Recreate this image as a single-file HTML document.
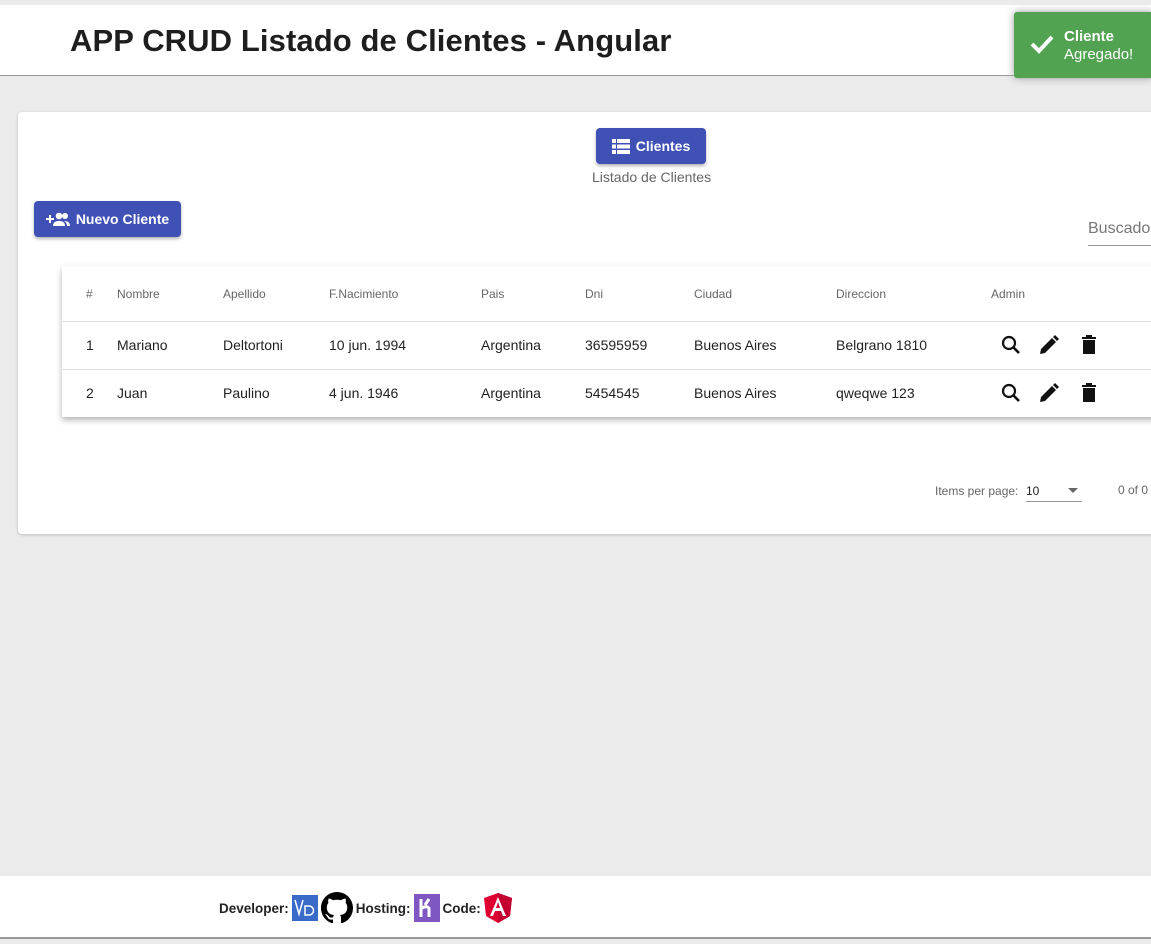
<!DOCTYPE html>
<html><head><meta charset="utf-8"><style>
*{box-sizing:border-box;margin:0;padding:0}
body{width:1151px;height:944px;background:#ebebeb;font-family:"Liberation Sans",sans-serif;position:relative;overflow:hidden;color:#222}
.hdr{position:absolute;left:0;top:5px;width:1151px;height:71px;background:#fff;border-bottom:1px solid #999}
.hdr h1{position:absolute;left:70px;top:18px;font-size:31px;font-weight:bold;letter-spacing:0.1px;color:#1e1e1e}
.toast{position:absolute;left:1014px;top:12px;width:140px;height:66px;background:#51a351;color:#fff;box-shadow:0 0 8px #999;border-radius:3px}
.toast .t{position:absolute;left:50px;top:16px;font-size:15px;line-height:18px}
.card{position:absolute;left:18px;top:112px;width:1140px;height:422px;background:#fff;border-radius:4px;box-shadow:0 1px 3px rgba(0,0,0,.2)}
.btn{position:absolute;background:#3f51b5;color:#fff;font-weight:bold;font-size:14px;border-radius:4px;box-shadow:0 2px 3px rgba(0,0,0,.3);display:flex;align-items:center;justify-content:center;gap:6px}
.sub{position:absolute;left:574px;top:57px;font-size:14px;color:#666}
.srch{position:absolute;left:1070px;top:108px;width:80px;font-size:16px;color:#777;border-bottom:1px solid #999;padding-bottom:7px}
.tbl{position:absolute;left:44px;top:154px;width:1100px;height:151px;background:#fff;box-shadow:0 3px 6px rgba(0,0,0,.3)}
.row{position:absolute;left:0;width:1100px;font-size:14px}
.row span{position:absolute}
.h span{font-size:12px;color:#666}
.line{position:absolute;left:0;width:1100px;height:1px;background:#e0e0e0}
.pg{position:absolute;font-size:12px;color:#666}
.ftr{position:absolute;left:0;top:876px;width:1151px;height:63px;background:#fff;border-bottom:2px solid #999}
.ftr .c{position:absolute;left:219px;top:16px;display:flex;align-items:center;gap:3px;font-weight:bold;font-size:13.5px}
</style></head><body>
<div class="hdr"><h1>APP CRUD Listado de Clientes - Angular</h1></div>
<div class="toast"><svg style="position:absolute;left:16px;top:22px" width="24" height="20" viewBox="0 0 24 20"><path d="M2 10l7 7L22 3" stroke="#fff" stroke-width="4" fill="none"/></svg><div class="t"><b>Cliente</b><br>Agregado!</div></div>
<div class="card">
 <div class="btn" style="left:578px;top:16px;width:110px;height:36px"><svg width="18" height="15" viewBox="0 0 18 15"><g fill="#fff"><rect x="0" y="0" width="4" height="4"/><rect x="5" y="0" width="13" height="4"/><rect x="0" y="5.5" width="4" height="4"/><rect x="5" y="5.5" width="13" height="4"/><rect x="0" y="11" width="4" height="4"/><rect x="5" y="11" width="13" height="4"/></g></svg>Clientes</div>
 <div class="sub">Listado de Clientes</div>
 <div class="btn" style="left:16px;top:89px;width:147px;height:36px"><svg width="24" height="14" viewBox="0 0 24 14"><g fill="#fff"><path d="M0 6h3V3h2v3h3v2H5v3H3V8H0z"/><circle cx="13" cy="4" r="3.3"/><circle cx="19" cy="4" r="3"/><path d="M7 14c0-4 3-5 6-5s6 1 6 5z"/><path d="M18 9c3 0 6 1 6 5h-3c0-2-1-4-3-5z"/></g></svg>Nuevo Cliente</div>
 <div class="srch">Buscador</div>
 <div class="tbl">
  <div class="row h" style="top:21px"><span style="left:24px">#</span><span style="left:55px">Nombre</span><span style="left:161px">Apellido</span><span style="left:267px">F.Nacimiento</span><span style="left:419px">Pais</span><span style="left:523px">Dni</span><span style="left:632px">Ciudad</span><span style="left:774px">Direccion</span><span style="left:929px">Admin</span></div>
  <div class="line" style="top:55px"></div>
  <div class="row" style="top:71px"><span style="left:24px">1</span><span style="left:55px">Mariano</span><span style="left:161px">Deltortoni</span><span style="left:267px">10 jun. 1994</span><span style="left:419px">Argentina</span><span style="left:523px">36595959</span><span style="left:632px">Buenos Aires</span><span style="left:774px">Belgrano 1810</span></div>
  <div class="line" style="top:103px"></div>
  <div class="row" style="top:119px"><span style="left:24px">2</span><span style="left:55px">Juan</span><span style="left:161px">Paulino</span><span style="left:267px">4 jun. 1946</span><span style="left:419px">Argentina</span><span style="left:523px">5454545</span><span style="left:632px">Buenos Aires</span><span style="left:774px">qweqwe 123</span></div>
  <svg style="position:absolute;left:938px;top:68px" width="100" height="70" viewBox="0 0 100 70">
   <defs><g id="ic"><circle cx="9" cy="9" r="6" stroke="#111" stroke-width="2.2" fill="none"/><path d="M13 13l6 6" stroke="#111" stroke-width="2.6"/><path d="M40 20l1-5 11-11 4 4-11 11z M53 3l2-2 4 4-2 2z" fill="#111"/><path d="M82 3h14v2H82z M86 1h6v2h-6z M83 6h12v14H83z" fill="#111"/></g></defs>
   <use href="#ic" y="0"/><use href="#ic" y="48"/>
  </svg>
 </div>
 <div class="pg" style="left:917px;top:372px">Items per page:</div>
 <div class="pg" style="left:1008px;top:372px;color:#222">10</div>
 <div style="position:absolute;left:1050px;top:376px;border-left:5px solid transparent;border-right:5px solid transparent;border-top:5px solid #666"></div>
 <div style="position:absolute;left:1008px;top:389px;width:56px;height:1px;background:#999"></div>
 <div class="pg" style="left:1100px;top:371px">0 of 0</div>
</div>
<div class="ftr"><div class="c">Developer:
 <svg width="26" height="26" viewBox="0 0 26 26"><rect width="26" height="26" fill="#3a6bc9"/><path d="M3 5l4 14 4-14" stroke="#fff" fill="none" stroke-width="1.5"/><path d="M13 11h4a4 4 0 010 9h-4z" stroke="#fff" fill="none" stroke-width="1.5"/></svg>
 <svg width="32" height="32" viewBox="0 0 16 16"><path fill="#000" d="M8 0C3.58 0 0 3.580 0 8c0 3.54 2.29 6.53 5.47 7.59.4.07.55-.17.55-.38 0-.19-.01-.82-.01-1.49-2.01.37-2.530-.49-2.69-.94-.09-.23-.48-.94-.82-1.13-.28-.15-.68-.52-.01-.53.63-.01 1.080.58 1.23.82.72 1.21 1.87.87 2.33.66.07-.52.28-.87.51-1.07-1.78-.2-3.64-.89-3.64-3.95 0-.87.31-1.59.82-2.15-.08-.2-.36-1.02.08-2.12 0 0 .67-.21 2.2.82.64-.18 1.32-.27 2-.27.68 0 1.36.09 2 .27 1.53-1.04 2.2-.82 2.2-.82.44 1.1.16 1.92.08 2.12.51.56.82 1.27.82 2.15 0 3.07-1.87 3.75-3.65 3.95.29.25.54.73.54 1.48 0 1.07-.01 1.93-.01 2.2 0 .21.15.46.55.38A8.013 8.013 0 0016 8c0-4.42-3.58-8-8-8z"/></svg>
 Hosting: <svg width="26" height="28" viewBox="0 0 26 28"><rect width="26" height="28" fill="#7e57c2"/><path d="M7 5v18M7 15c3-3 8-3 8 0v8M15 5l-4 6" stroke="#fff" stroke-width="3" fill="none"/></svg>
 Code: <svg width="28" height="30" viewBox="0 0 28 30"><path d="M14 0L0 5l2 18 12 7 12-7 2-18z" fill="#dd0031"/><path d="M14 0v30l12-7 2-18z" fill="#c3002f"/><path d="M14 4L6 23h3l2-5h6l2 5h3zM12 15l2-6 2 6z" fill="#fff"/></svg>
</div></div>
</body></html>
